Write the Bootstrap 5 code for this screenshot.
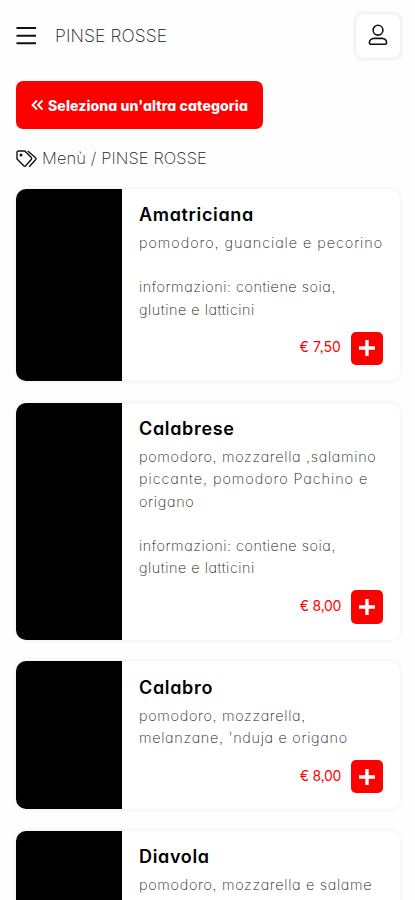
<!DOCTYPE html>
<html lang="it">
<head>
<meta charset="utf-8">
<meta name="viewport" content="width=device-width, initial-scale=1">
<title>PINSE ROSSE</title>
<link rel="stylesheet" href="https://cdn.jsdelivr.net/npm/bootstrap@5.3.0/dist/css/bootstrap.min.css">
<style>
body{font-family:Inter,"Liberation Sans",sans-serif;font-feature-settings:"cv11","ss03";background:#fefefe;color:#111;overflow-x:hidden}
.page{height:900px;overflow:hidden;padding:0 15px 0 16px}
.topbar{height:71px}
.brand{font-size:17.5px;font-weight:200;letter-spacing:.1px;margin-left:19px;margin-top:1px;color:#111}
.user-btn{width:44px;height:44px;border-radius:7px;background:#fff;box-shadow:0 0 5px rgba(0,0,0,.14)}
.back-btn,.back-btn:hover{background:red;color:#fff;width:247px;height:48px;border-radius:7px;font-size:14px;font-weight:800;letter-spacing:.12px;margin-top:10px}
.crumbs{height:24px;margin-top:17.5px;margin-bottom:18.1px;font-size:16.5px;font-weight:200;letter-spacing:.1px;color:#222}
.dish{border-radius:10px;background:#fff;box-shadow:0 0 5px rgba(0,0,0,.075);margin-bottom:21.5px}
.dish-photo{width:106.4px;background:#000;flex:none}
.dish-body{padding:12.5px 17px 16px 16.6px}
.dish-name{font-size:18px;font-weight:600;line-height:27px;letter-spacing:.67px;margin:0 0 4px;color:#000}
.dish-text{font-size:14.4px;line-height:22.15px;font-weight:200;letter-spacing:.7px;margin:0 0 10.8px;color:#222;white-space:nowrap}
.ls-wide{letter-spacing:.95px}
.ls-info{letter-spacing:.54px}
.dish-price{color:red;font-size:14px;font-weight:400;letter-spacing:-.3px;margin-right:9.5px;margin-top:-3px}
.ls-price{letter-spacing:.15px}
.add-btn{width:32.5px;height:33.7px;border-radius:5px;background:red}
.dish-clipped{height:150px}
</style>
<script src="https://cdn.jsdelivr.net/npm/bootstrap@5.3.0/dist/js/bootstrap.bundle.min.js"></script>
</head>
<body>
<div class="page">
<header class="topbar d-flex align-items-center">
<svg width="20" height="20" viewBox="0 0 20 20" stroke="#111" stroke-width="2"><path d="M.5 2H20M.5 9.700H20M.5 17.200H20"/></svg>
<span class="brand">PINSE ROSSE</span>
<button class="user-btn btn border-0 p-0 ms-auto d-flex align-items-center justify-content-center" aria-label="Account">
<svg width="20" height="23" viewBox="0 0 20 23" fill="none" stroke="#111" stroke-width="1.600"><circle cx="10" cy="6.200" r="4.900"/><path d="M6 14.400h8c2.500 0 4.600 2 4.600 4.400 0 1-.6 1.500-1.600 1.500H3c-1 0-1.600-.5-1.600-1.500 0-2.400 2.100-4.400 4.600-4.400z"/></svg>
</button>
</header>
<a href="#" class="back-btn btn border-0 p-0 d-flex align-items-center justify-content-center">
<svg class="me-1" width="13" height="12" viewBox="0 0 13 12" fill="none" stroke="#fff" stroke-width="1.800"><path d="M6 1.500 1.500 6 6 10.500M11.500 1.500 7 6l4.500 4.500"/></svg>
<span>Seleziona un'altra categoria</span></a>
<nav class="crumbs d-flex align-items-center">
<svg width="22" height="18" viewBox="0 0 22 18" fill="none" stroke="#111" stroke-width="1.400" stroke-linejoin="round"><path d="M1 2.500Q1 1 2.500 1h6.300l6.500 6.500q1 1 0 2l-5.600 6.300q-1 1-2 0L1 9z"/><path d="M11.800 1l7.800 6.800q1 1 0 2l-6.400 7"/><circle cx="5" cy="5" r=".8" fill="#111"/></svg>
<span class="ms-1">Menù / PINSE ROSSE</span></nav>
<main>
<article class="dish d-flex overflow-hidden"><div class="dish-photo"></div><div class="dish-body flex-grow-1">
<h2 class="dish-name">Amatriciana</h2>
<p class="dish-text"><span class="ls-wide">pomodoro, guanciale e pecorino</span><br><br><span class="ls-info">informazioni: contiene soia,</span><br><span class="ls-info">glutine e latticini</span></p>
<div class="d-flex justify-content-end align-items-center"><span class="dish-price ls-price">€ 7,50</span><button class="add-btn btn border-0 p-0 d-flex align-items-center justify-content-center" aria-label="Aggiungi"><svg width="16" height="16" viewBox="0 0 16 16" stroke="#fff" stroke-width="3.400"><path d="M0 8h16M8 0v16"/></svg></button></div>
</div></article>
<article class="dish d-flex overflow-hidden"><div class="dish-photo"></div><div class="dish-body flex-grow-1">
<h2 class="dish-name">Calabrese</h2>
<p class="dish-text"><span>pomodoro, mozzarella ,salamino</span><br><span class="ls-wide">piccante, pomodoro Pachino e</span><br><span>origano</span><br><br><span class="ls-info">informazioni: contiene soia,</span><br><span class="ls-info">glutine e latticini</span></p>
<div class="d-flex justify-content-end align-items-center"><span class="dish-price">€ 8,00</span><button class="add-btn btn border-0 p-0 d-flex align-items-center justify-content-center" aria-label="Aggiungi"><svg width="16" height="16" viewBox="0 0 16 16" stroke="#fff" stroke-width="3.400"><path d="M0 8h16M8 0v16"/></svg></button></div>
</div></article>
<article class="dish d-flex overflow-hidden"><div class="dish-photo"></div><div class="dish-body flex-grow-1">
<h2 class="dish-name">Calabro</h2>
<p class="dish-text"><span>pomodoro, mozzarella,</span><br><span>melanzane, 'nduja e origano</span></p>
<div class="d-flex justify-content-end align-items-center"><span class="dish-price">€ 8,00</span><button class="add-btn btn border-0 p-0 d-flex align-items-center justify-content-center" aria-label="Aggiungi"><svg width="16" height="16" viewBox="0 0 16 16" stroke="#fff" stroke-width="3.400"><path d="M0 8h16M8 0v16"/></svg></button></div>
</div></article>
<article class="dish dish-clipped d-flex overflow-hidden"><div class="dish-photo"></div><div class="dish-body flex-grow-1">
<h2 class="dish-name">Diavola</h2>
<p class="dish-text"><span>pomodoro, mozzarella e salame</span></p>
</div></article>
</main>
</div>
</body>
</html>
